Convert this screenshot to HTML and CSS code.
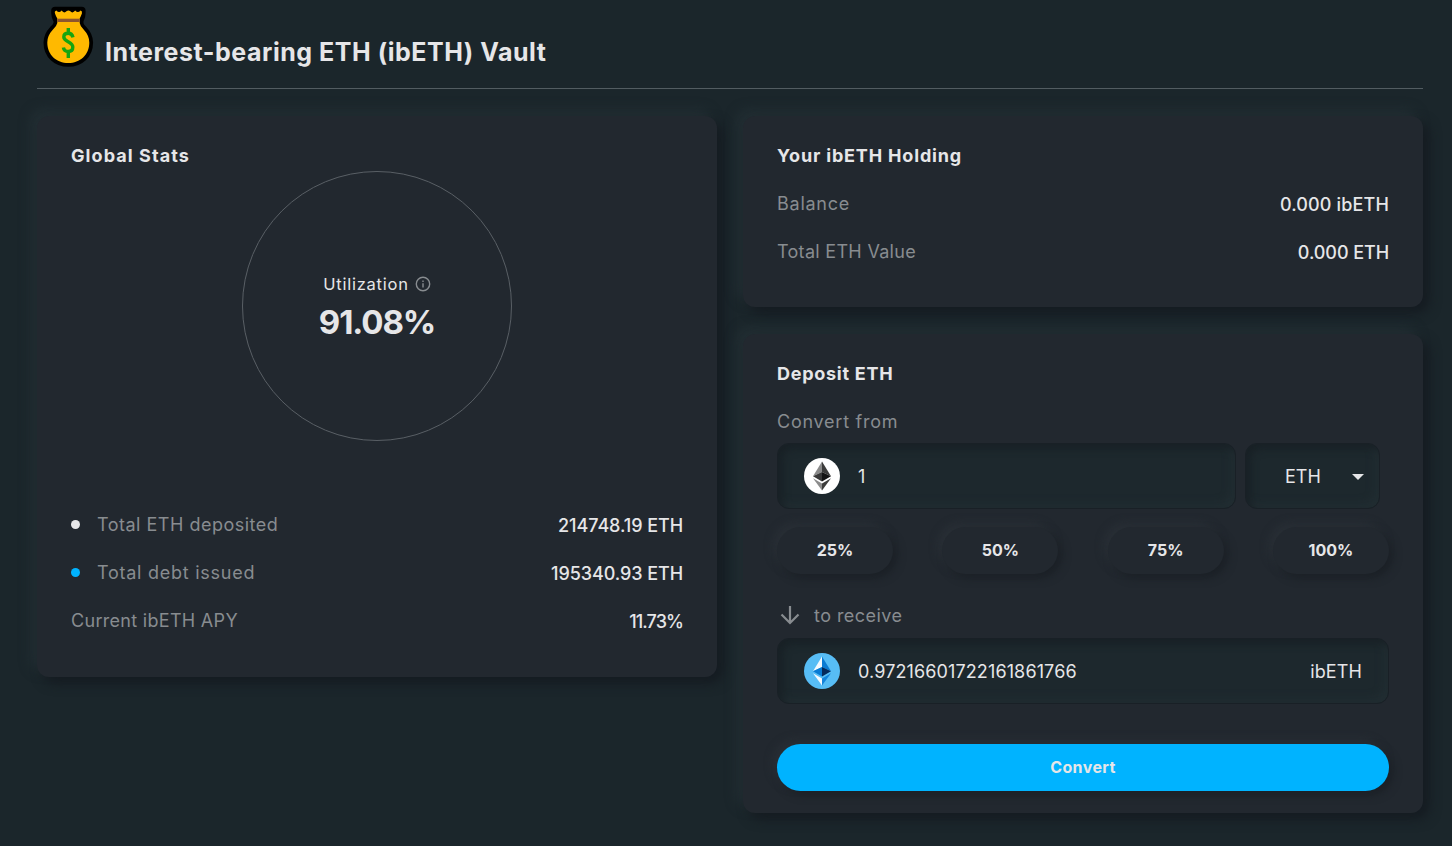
FILE: index.html
```html
<!DOCTYPE html>
<html lang="en">
<head>
<meta charset="utf-8">
<title>Interest-bearing ETH (ibETH) Vault</title>
<link rel="stylesheet" href="styles.css">
</head>
<body>
<header class="page-head">
  <svg class="bag" width="52" height="62" viewBox="0 0 52 62">
    <path d="M13 4.600Q12.600 10 15.300 14.500V17.500Q14.500 20.500 11 23.500Q5.300 29.500 5.300 36.500C5.300 49 14.500 57 26.300 57S47.300 49 47.300 36.500Q47.300 29.500 41.600 23.500Q38.200 20.500 37.700 17.500V14.500Q40.200 10 39.800 4.600Z" fill="#000" stroke="#000" stroke-width="7.600" stroke-linejoin="round"/>
    <path d="M13 7.500Q12.200 5.200 14.500 4.600Q17 7.600 19.600 4.600Q22 8 24.800 5Q26.300 3.800 28 5Q30.600 8 33.200 4.600Q36 7.600 38.500 4.600Q40.600 5.200 39.900 7.500Q39 10 37.700 12.500V17Q38.200 20.500 41.600 23.500Q47.300 29.500 47.300 36.500C47.300 49 38 57 26.300 57S5.300 49 5.300 36.500Q5.300 29.500 11 23.500Q14.500 20.500 15.300 17V12.500Q13.800 10 13 7.500Z" fill="#ffb900"/>
    <path d="M15.300 12.700H37.700V16H15.300Z" fill="#8e562e"/>
    <path d="M31 31.300Q30 27.300 26.300 27.300Q21.800 27.300 21.800 31C21.800 36 30.800 35.500 30.800 41Q30.800 45.500 26.300 45.500Q22 45.500 21.400 41.500M26.300 22V28M26.300 45V52" fill="none" stroke="#16a50f" stroke-width="3.400"/>
  </svg>
  <h1>Interest-bearing ETH (ibETH) Vault</h1>
</header>
<main class="columns">
  <section class="card stats">
    <h2>Global Stats</h2>
    <div class="gauge">
      <div class="gauge-label"><span>Utilization</span>
        <svg width="16" height="16" viewBox="0 0 16 16" fill="none" stroke="#888c90" stroke-width="1.400"><circle cx="8" cy="8" r="6.700"/><path d="M8 7.200V11.500M8 4.500V5.900"/></svg>
      </div>
      <strong class="gauge-value">91.08%</strong>
    </div>
    <dl class="rows">
      <div class="row"><dt><i class="dot"></i>Total ETH deposited</dt><dd>214748.19 ETH</dd></div>
      <div class="row"><dt class="loose"><i class="dot dot-blue"></i>Total debt issued</dt><dd>195340.93 ETH</dd></div>
      <div class="row"><dt class="snug">Current ibETH APY</dt><dd class="tight">11.73%</dd></div>
    </dl>
  </section>
  <div class="side">
    <section class="card holding">
      <h2>Your ibETH Holding</h2>
      <dl class="rows">
        <div class="row"><dt class="loose">Balance</dt><dd class="wide">0.000 ibETH</dd></div>
        <div class="row"><dt class="snug">Total ETH Value</dt><dd>0.000 ETH</dd></div>
      </dl>
    </section>
    <section class="card deposit">
      <h2>Deposit ETH</h2>
      <div class="caption loose">Convert from</div>
      <div class="from">
        <div class="field amount">
          <svg class="coin" width="36" height="36" viewBox="0 0 36 36"><circle cx="18" cy="18" r="18" fill="#fff"/><path d="M18 3.500V14L9 18.300Z" fill="#8a8a8a"/><path d="M18 3.500L27 18.300L18 14Z" fill="#3c3c3b"/><path d="M9 18.300L18 14V23.500Z" fill="#393939"/><path d="M27 18.300L18 14V23.500Z" fill="#141414"/><path d="M9 20.300L18 25.500V32.500Z" fill="#8c8c8c"/><path d="M27 20.300L18 25.500V32.500Z" fill="#3c3c3b"/></svg>
          <span>1</span>
        </div>
        <div class="field token"><span>ETH</span><svg class="caret" width="12" height="6" viewBox="0 0 12 6"><path d="M0 0H12L6 6Z" fill="#e6e6e8"/></svg></div>
      </div>
      <div class="shares">
        <button>25%</button><button>50%</button><button>75%</button><button>100%</button>
      </div>
      <div class="caption receive"><svg width="20" height="20" viewBox="0 0 20 20" fill="none" stroke="#888c90" stroke-width="2.200"><path d="M10 1V18M1.500 9.500L10 18L18.500 9.500"/></svg>to receive</div>
      <div class="field result">
        <svg class="coin" width="36" height="36" viewBox="0 0 36 36"><circle cx="18" cy="18" r="18" fill="#57bdf5"/><path d="M18 3.500V14L9 18.300Z" fill="#f4faff"/><path d="M18 3.500L27 18.300L18 14Z" fill="#0a7bd3"/><path d="M9 18.300L18 14V23.500Z" fill="#087bd4"/><path d="M27 18.300L18 14V23.500Z" fill="#052b5c"/><path d="M9 20.300L18 25.500V32.500Z" fill="#f4faff"/><path d="M27 20.300L18 25.500V32.500Z" fill="#1384dc"/></svg>
        <span>0.97216601722161861766</span><span class="unit">ibETH</span>
      </div>
      <button class="convert">Convert</button>
    </section>
  </div>
</main>
</body>
</html>
```
FILE: styles.css
```css
* { box-sizing: border-box; }
body {
  margin: 0;
  padding: 0 29px 0 37px;
  height: 846px;
  overflow: hidden;
  background: #1b262b;
  color: #e6e6e8;
  font: 18px/24px Inter, sans-serif;
}
h1, h2, dl, dd { margin: 0; }
.page-head {
  display: flex;
  height: 89px;
  padding: 6px 0 0 5px;
  border-bottom: 1px solid #525c61;
}
.bag { flex: none; }
h1 {
  margin: 30px 0 0 11px;
  font-size: 25px;
  line-height: 32px;
  font-weight: 650;
  letter-spacing: .53px;
}
.columns {
  display: grid;
  grid-template-columns: 680px 680px;
  gap: 26px;
  padding-top: 27px;
  align-items: start;
}
.side { display: grid; gap: 27px; }
.card {
  padding: 28px 34px 0;
  border-radius: 12px;
  background: #22282f;
  box-shadow: 6px 6px 12px #151b21, -6px -6px 12px #232f34;
}
.stats { height: 561px; }
.holding { height: 191px; }
.deposit { height: 479px; }
h2 { font-size: 18px; line-height: 24px; font-weight: 700; letter-spacing: .83px; }
.stats h2 { letter-spacing: 1.07px; }
.deposit h2 { letter-spacing: .73px; }
.gauge {
  width: 270px;
  height: 270px;
  margin: 3px auto 0;
  border: 1px solid #595f65;
  border-radius: 50%;
  display: flex;
  flex-direction: column;
  align-items: center;
  padding-top: 100px;
}
.gauge-label { display: flex; align-items: center; gap: 6px; font-size: 16.5px; letter-spacing: .75px; }
.gauge-value { font-size: 33px; line-height: 40px; margin-top: 6px; font-weight: 700; letter-spacing: -1.1px; }
.row { display: flex; justify-content: space-between; height: 48px; line-height: 48px; }
.stats .rows { margin-top: 60px; }
.holding .rows { margin-top: 12px; }
.row dt { display: flex; align-items: center; color: #888c90; letter-spacing: .5px; }
.row dd { padding-top: 1px; font-weight: 500; letter-spacing: -.07px; }
.row dd.wide { letter-spacing: .15px; }
.row dd.tight { letter-spacing: -.9px; }
.row dt.loose, .caption.loose { letter-spacing: .75px; }
.row dt.snug { letter-spacing: .3px; }
.dot { width: 9px; height: 9px; border-radius: 50%; background: #e6e6e8; margin: 0 17px 2px 0; }
.dot-blue { background: #00b3ff; }
.caption { margin-top: 24px; color: #888c90; letter-spacing: .45px; display: flex; align-items: center; }
.from { display: grid; grid-template-columns: 459px 135px; gap: 9px; margin-top: 9px; }
.field {
  height: 66px;
  display: flex;
  align-items: center;
  border: 1px solid #192026;
  border-radius: 12px;
  background: #1d282d;
  box-shadow: inset 4px 4px 8px #182025, inset -4px -4px 8px #232f34;
}
.field span { padding-top: 2px; }
.coin { margin: 0 18px 0 26px; flex: none; }
.token { padding-left: 39px; }
.caret { margin: 1px 0 0 31px; }
.shares { display: flex; justify-content: space-between; margin-top: 18px; }
button {
  width: 116px;
  height: 47px;
  padding: 0 0 2px;
  border: 0;
  border-radius: 24px;
  background: #22282f;
  color: #e6e6e8;
  font: 700 16px/24px Inter, sans-serif;
  box-shadow: 4px 4px 8px #1b2026, -4px -4px 8px #2a3037;
}
.receive { margin-top: 30px; }
.receive svg { margin: -2px 14px 0 3px; }
.result { margin-top: 10px; letter-spacing: .12px; }
.unit { margin-left: auto; margin-right: 26px; }
.convert { display: block; width: 100%; margin-top: 40px; background: #00b3ff; letter-spacing: .4px; }
```
